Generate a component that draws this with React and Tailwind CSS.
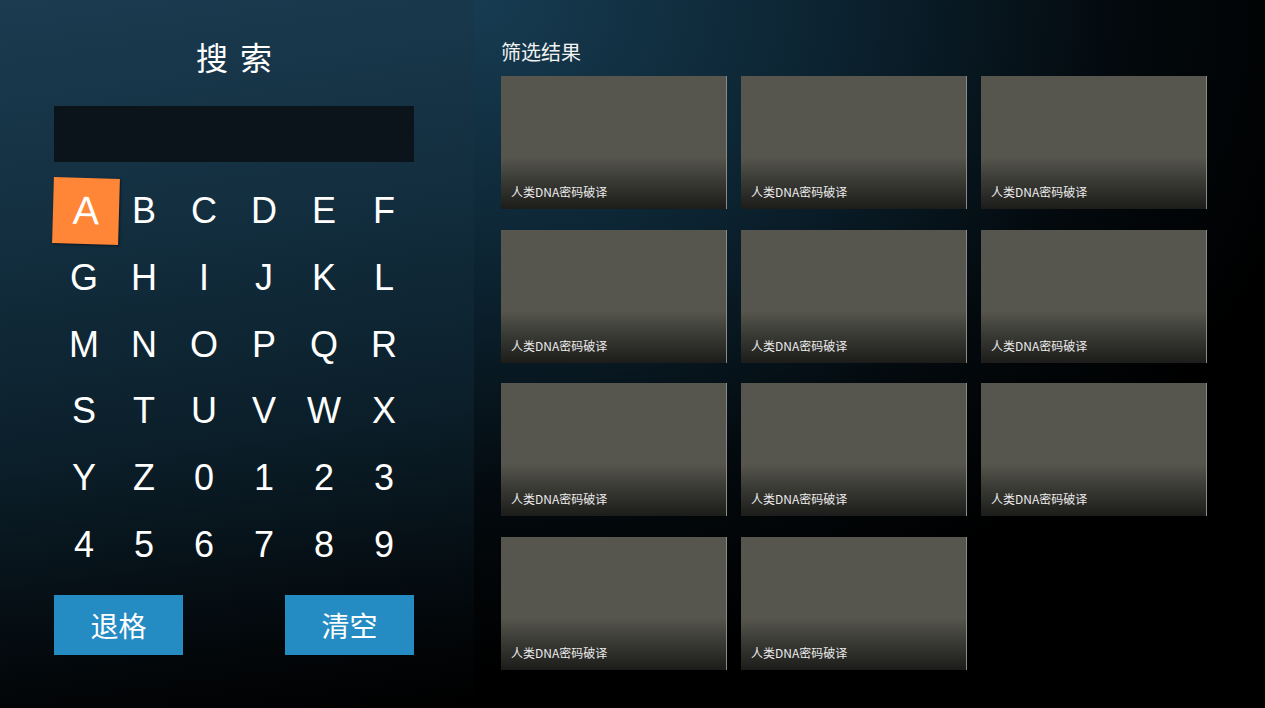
const keys = [
  'A', 'B', 'C', 'D', 'E', 'F',
  'G', 'H', 'I', 'J', 'K', 'L',
  'M', 'N', 'O', 'P', 'Q', 'R',
  'S', 'T', 'U', 'V', 'W', 'X',
  'Y', 'Z', '0', '1', '2', '3',
  '4', '5', '6', '7', '8', '9',
];

const results = Array.from({ length: 11 }, (_, i) => ({ id: i, title: '人类DNA密码破译' }));

const cjk = "font-['Microsoft_YaHei','Noto_Sans_CJK_SC',sans-serif]";

function Key({ label, active }) {
  return (
    <div className="h-[66.67px] flex items-center justify-center">
      <div
        className={`w-[60px] h-[60px] flex items-center justify-center text-[36px] text-white font-['Liberation_Sans',Arial,sans-serif] ${
          active ? 'bg-[#ff8636] translate-x-[2px] scale-110 rotate-[1.6deg] shadow-[1px_1px_2px_rgba(0,0,0,0.5)]' : ''
        }`}
      >
        {label}
      </div>
    </div>
  );
}

function ResultCard({ title }) {
  return (
    <div className="relative h-[133px] bg-[#56564e] border-r border-[#8b8b85] overflow-hidden">
      <div className="absolute inset-x-0 bottom-0 h-[52px] bg-gradient-to-b from-[#56564e] to-[#1c1c1a]" />
      <span className={`absolute left-[10px] bottom-[10px] text-[12px] leading-[14px] text-[#ececec] ${cjk}`}>{title}</span>
    </div>
  );
}

export default function App() {
  return (
    <div className="w-[1265px] h-[708px] flex overflow-hidden bg-black">
      {/* keyboard side */}
      <div className="w-[474px] shrink-0 pl-[54px] pt-[36px] bg-[linear-gradient(172deg,#1c3b50_0%,#132f40_30%,#0b1f2a_60%,#020406_92%,#000_100%)]">
        <div className="w-[360px]">
          <h1 className={`h-[40px] leading-[40px] text-center text-[32px] tracking-[12px] pl-[12px] text-white ${cjk}`}>搜索</h1>
          <div className="mt-[30px] h-[56px] bg-[#0a141a]" />
          <div className="mt-[16px] grid grid-cols-6">
            {keys.map((k, i) => (
              <Key key={k} label={k} active={i === 0} />
            ))}
          </div>
          <div className="mt-[17px] flex justify-between">
            <button className={`w-[129px] h-[60px] bg-[#258bc3] text-white text-[28px] ${cjk}`}>退格</button>
            <button className={`w-[129px] h-[60px] bg-[#258bc3] text-white text-[28px] ${cjk}`}>清空</button>
          </div>
        </div>
      </div>

      {/* results side */}
      <div className="flex-1 pl-[27px] pt-[42px] bg-[radial-gradient(ellipse_110%_95%_at_0%_0%,#173c52_0%,#0c2432_40%,#03090d_75%,#000_100%)]">
        <h2 className={`h-[20px] leading-[20px] text-[20px] text-[#f2f2f2] ${cjk}`}>筛选结果</h2>
        <div className="mt-[14px] grid grid-cols-[226px_226px_226px] gap-x-[14px] gap-y-[20.5px]">
          {results.map((r) => (
            <ResultCard key={r.id} title={r.title} />
          ))}
        </div>
      </div>
    </div>
  );
}
